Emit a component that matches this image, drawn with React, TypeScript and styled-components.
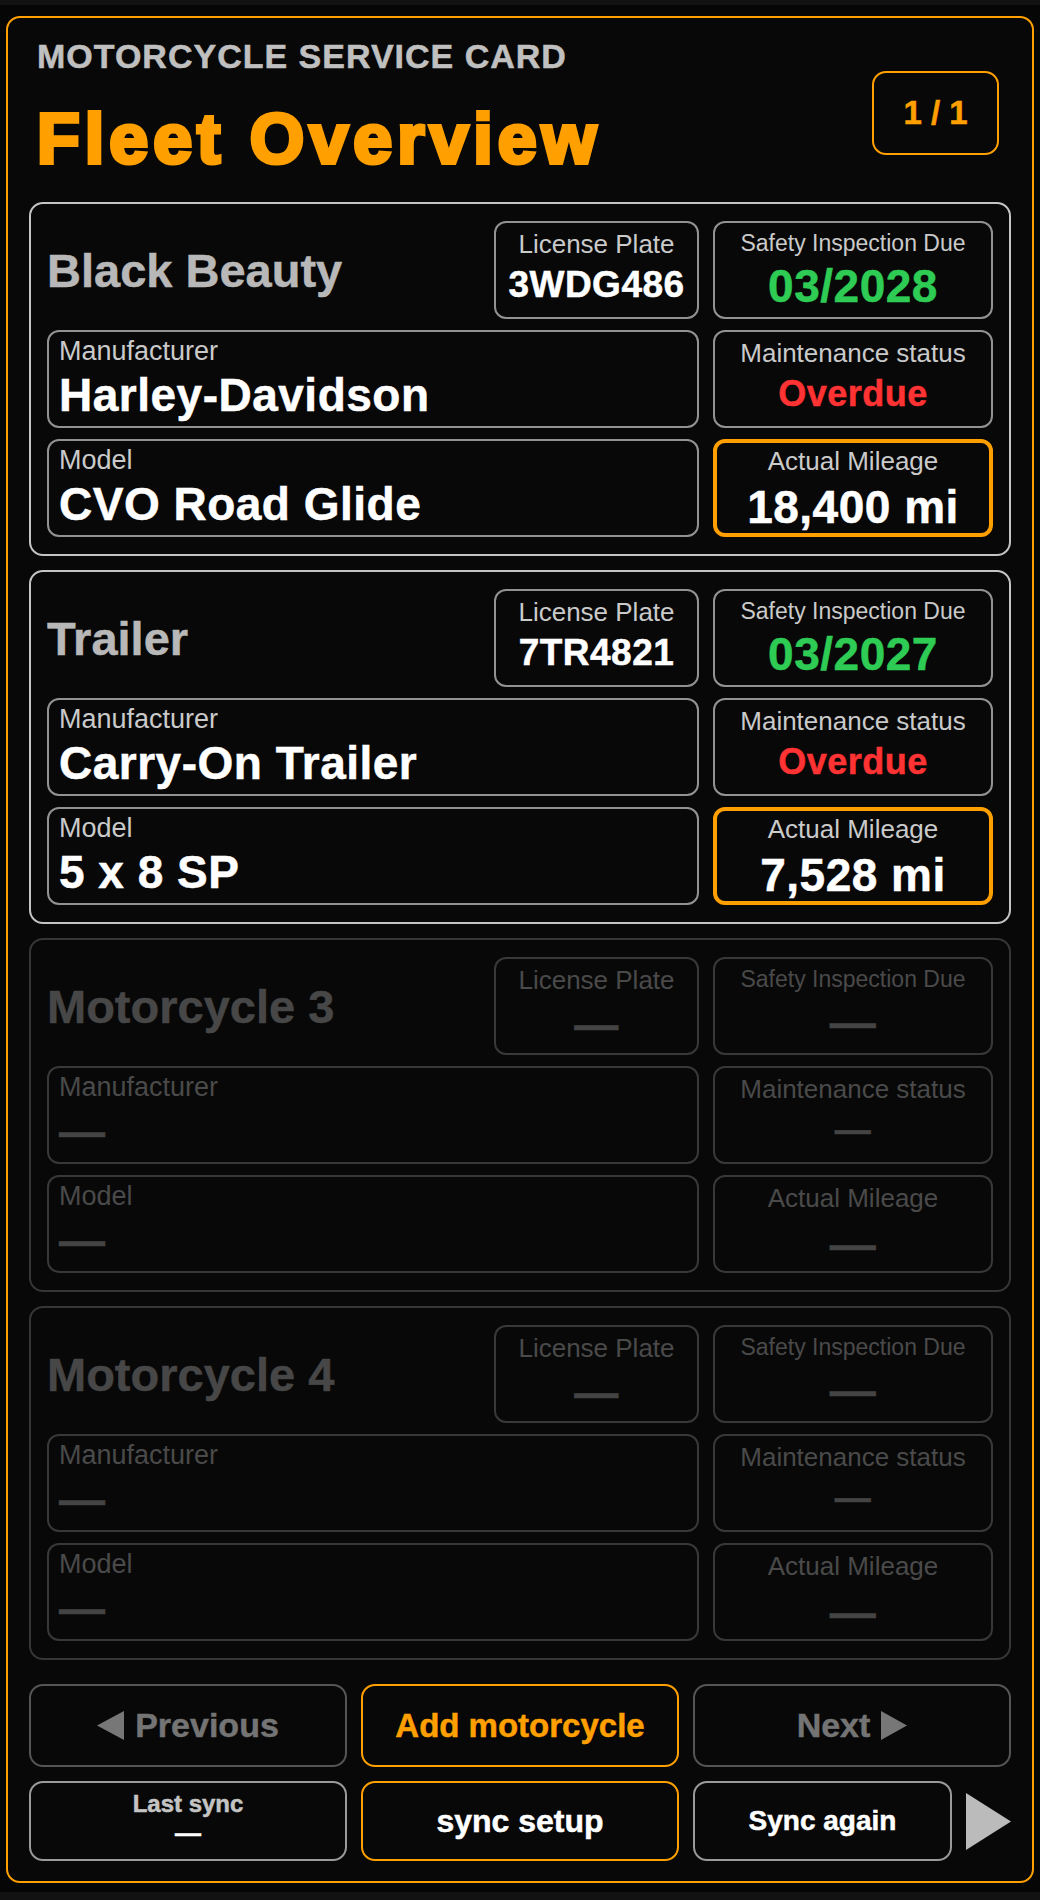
import React from 'react';
import styled, { createGlobalStyle, css } from 'styled-components';

const ORANGE = '#ffa000';

const GlobalStyle = createGlobalStyle`
  html, body {
    margin: 0;
    padding: 0;
    background: #121212;
  }
  body {
    font-family: "Liberation Sans", Arial, sans-serif;
  }
  * {
    box-sizing: border-box;
  }
`;

// the reference text is rendered a touch heavier than Liberation Bold
const heavy = css`
  -webkit-text-stroke: 0.5px currentColor;
`;

const Page = styled.div`
  margin-top: 5px;
  padding: 11px 6px 9px;
  background: #060606;
`;

const Frame = styled.div`
  border: 2px solid ${ORANGE};
  border-radius: 14px;
  background: #080808;
  padding: 16px 21px 20px;
`;

const Header = styled.header`
  display: flex;
  justify-content: space-between;
  align-items: flex-start;
  padding: 0 12px 0 8px;
  margin-bottom: 23px;
`;

const HeaderText = styled.div`
  display: flex;
  flex-direction: column;
  padding-top: 3px;
`;

const Eyebrow = styled.div`
  font-size: 34px;
  line-height: 39px;
  font-weight: 700;
  letter-spacing: 1px;
  color: #c0c0c0;
  ${heavy}
`;

const Title = styled.h1`
  margin: 23px 0 0;
  font-size: 70px;
  line-height: 80px;
  font-weight: 900;
  letter-spacing: 5px;
  color: ${ORANGE};
  -webkit-text-stroke: 4px ${ORANGE};
`;

const PageBadge = styled.div`
  margin-top: 37px;
  width: 127px;
  height: 84px;
  border: 2px solid ${ORANGE};
  border-radius: 14px;
  display: flex;
  align-items: center;
  justify-content: center;
  font-size: 33px;
  font-weight: 700;
  color: ${ORANGE};
  ${heavy}
`;

const CardList = styled.div`
  display: flex;
  flex-direction: column;
  gap: 14px;
`;

type Tone = 'active' | 'muted';

const Card = styled.section<{ $tone: Tone }>`
  border: 2px solid ${(p) => (p.$tone === 'active' ? '#c4c4c4' : '#363636')};
  border-radius: 14px;
  padding: 17px 16px 17px;
  display: grid;
  grid-template-columns: 1fr 280px;
  grid-auto-rows: 98px;
  column-gap: 14px;
  row-gap: 11px;
`;

const TopRow = styled.div`
  display: flex;
  align-items: center;
  justify-content: space-between;
`;

const BikeName = styled.h2<{ $tone: Tone }>`
  margin: 0;
  font-size: 47px;
  font-weight: 700;
  color: ${(p) => (p.$tone === 'active' ? '#b8b8b8' : '#474747')};
  ${heavy}
`;

const Field = styled.div<{ $tone: Tone }>`
  border: 2px solid ${(p) => (p.$tone === 'active' ? '#929292' : '#383838')};
  border-radius: 12px;
  padding: 4px 10px 0;
  display: flex;
  flex-direction: column;
`;

const FieldLabel = styled.div<{ $tone: Tone }>`
  font-size: 27px;
  line-height: 31px;
  color: ${(p) => (p.$tone === 'active' ? '#cacaca' : '#4a4a4a')};
`;

const FieldValue = styled.div<{ $tone: Tone }>`
  margin-top: 3px;
  font-size: 46px;
  line-height: 50px;
  font-weight: 700;
  letter-spacing: 0.5px;
  color: ${(p) => (p.$tone === 'active' ? '#ffffff' : '#444444')};
  ${heavy}
`;

const Stat = styled.div<{ $tone: Tone; $highlight?: boolean; $width?: number }>`
  width: ${(p) => (p.$width ? `${p.$width}px` : 'auto')};
  height: 98px;
  border: ${(p) => (p.$highlight ? 4 : 2)}px solid
    ${(p) => (p.$highlight ? ORANGE : p.$tone === 'active' ? '#929292' : '#383838')};
  border-radius: 12px;
  padding-top: ${(p) => (p.$highlight ? 4 : 7)}px;
  display: flex;
  flex-direction: column;
  align-items: center;
  text-align: center;
`;

const StatLabel = styled.div<{ $tone: Tone; $size: number }>`
  font-size: ${(p) => p.$size}px;
  line-height: 1.15;
  white-space: nowrap;
  color: ${(p) => (p.$tone === 'active' ? '#cacaca' : '#4a4a4a')};
`;

const StatValue = styled.div<{ $color: string; $size: number }>`
  margin-top: 4px;
  font-size: ${(p) => p.$size}px;
  line-height: 1.15;
  font-weight: 700;
  letter-spacing: 0.5px;
  white-space: nowrap;
  color: ${(p) => p.$color};
  ${heavy}
`;

const Controls = styled.div`
  margin-top: 24px;
  display: grid;
  grid-template-columns: repeat(3, 1fr);
  grid-template-rows: 83px 80px;
  gap: 14px;
`;

type Variant = 'muted' | 'accent' | 'sync' | 'plain';

const borderFor: Record<Variant, string> = {
  muted: '#555555',
  accent: ORANGE,
  sync: ORANGE,
  plain: '#9a9a9a',
};

const colorFor: Record<Variant, string> = {
  muted: '#747474',
  accent: ORANGE,
  sync: '#ffffff',
  plain: '#ffffff',
};

const Button = styled.button<{ $variant: Variant; $size: number }>`
  flex: 1;
  min-width: 0;
  height: 100%;
  background: transparent;
  border: 2px solid ${(p) => borderFor[p.$variant]};
  border-radius: 14px;
  display: flex;
  align-items: center;
  justify-content: center;
  gap: 11px;
  padding: 0;
  font-family: inherit;
  font-size: ${(p) => p.$size}px;
  font-weight: 700;
  color: ${(p) => colorFor[p.$variant]};
  cursor: pointer;
  ${heavy}
`;

const SyncStatus = styled(Button)`
  flex-direction: column;
  gap: 1px;
  padding-bottom: 5px;
`;

const SyncLabel = styled.span`
  font-size: 24px;
  line-height: 28px;
  color: #c4c4c4;
`;

const SyncDash = styled.span`
  font-size: 26px;
  line-height: 28px;
  color: #ffffff;
`;

const SyncCell = styled.div`
  display: flex;
  align-items: center;
  gap: 14px;
`;

const Arrow = ({ dir, color, w, h }: { dir: 'left' | 'right'; color: string; w: number; h: number }) => (
  <svg width={w} height={h} viewBox={`0 0 ${w} ${h}`} aria-hidden>
    <polygon
      points={dir === 'left' ? `${w},0 ${w},${h} 0,${h / 2}` : `0,0 0,${h} ${w},${h / 2}`}
      fill={color}
    />
  </svg>
);

interface Motorcycle {
  name: string;
  plate?: string;
  inspection?: string;
  manufacturer?: string;
  status?: string;
  model?: string;
  mileage?: string;
}

const fleet: Motorcycle[] = [
  {
    name: 'Black Beauty',
    plate: '3WDG486',
    inspection: '03/2028',
    manufacturer: 'Harley-Davidson',
    status: 'Overdue',
    model: 'CVO Road Glide',
    mileage: '18,400 mi',
  },
  {
    name: 'Trailer',
    plate: '7TR4821',
    inspection: '03/2027',
    manufacturer: 'Carry-On Trailer',
    status: 'Overdue',
    model: '5 x 8 SP',
    mileage: '7,528 mi',
  },
  { name: 'Motorcycle 3' },
  { name: 'Motorcycle 4' },
];

const DASH = '\u2014';

const BikeCard: React.FC<{ bike: Motorcycle }> = ({ bike }) => {
  const tone: Tone = bike.plate ? 'active' : 'muted';
  const active = tone === 'active';
  const muted = '#444444';

  return (
    <Card $tone={tone}>
      <TopRow>
        <BikeName $tone={tone}>{bike.name}</BikeName>
        <Stat $tone={tone} $width={205}>
          <StatLabel $tone={tone} $size={26}>License Plate</StatLabel>
          <StatValue $color={active ? '#ffffff' : muted} $size={active ? 37 : 44}>
            {bike.plate ?? DASH}
          </StatValue>
        </Stat>
      </TopRow>
      <Stat $tone={tone}>
        <StatLabel $tone={tone} $size={23}>Safety Inspection Due</StatLabel>
        <StatValue $color={active ? '#2ecc55' : muted} $size={46}>
          {bike.inspection ?? DASH}
        </StatValue>
      </Stat>

      <Field $tone={tone}>
        <FieldLabel $tone={tone}>Manufacturer</FieldLabel>
        <FieldValue $tone={tone}>{bike.manufacturer ?? DASH}</FieldValue>
      </Field>
      <Stat $tone={tone}>
        <StatLabel $tone={tone} $size={26}>Maintenance status</StatLabel>
        <StatValue $color={active ? '#ff3333' : muted} $size={36}>
          {bike.status ?? DASH}
        </StatValue>
      </Stat>

      <Field $tone={tone}>
        <FieldLabel $tone={tone}>Model</FieldLabel>
        <FieldValue $tone={tone}>{bike.model ?? DASH}</FieldValue>
      </Field>
      <Stat $tone={tone} $highlight={active}>
        <StatLabel $tone={tone} $size={26}>Actual Mileage</StatLabel>
        <StatValue $color={active ? '#ffffff' : muted} $size={46}>
          {bike.mileage ?? DASH}
        </StatValue>
      </Stat>
    </Card>
  );
};

export default function App() {
  return (
    <>
      <GlobalStyle />
      <Page>
        <Frame>
          <Header>
            <HeaderText>
              <Eyebrow>MOTORCYCLE SERVICE CARD</Eyebrow>
              <Title>Fleet Overview</Title>
            </HeaderText>
            <PageBadge>1 / 1</PageBadge>
          </Header>

          <CardList>
            {fleet.map((bike) => (
              <BikeCard key={bike.name} bike={bike} />
            ))}
          </CardList>

          <Controls>
            <Button $variant="muted" $size={34}>
              <Arrow dir="left" color="#777777" w={27} h={29} />
              Previous
            </Button>
            <Button $variant="accent" $size={33}>Add motorcycle</Button>
            <Button $variant="muted" $size={34}>
              Next
              <Arrow dir="right" color="#777777" w={26} h={29} />
            </Button>

            <SyncStatus $variant="plain" $size={24}>
              <SyncLabel>Last sync</SyncLabel>
              <SyncDash>{DASH}</SyncDash>
            </SyncStatus>
            <Button $variant="sync" $size={32}>sync setup</Button>
            <SyncCell>
              <Button $variant="plain" $size={28}>Sync again</Button>
              <Arrow dir="right" color="#bbbbbb" w={45} h={57} />
            </SyncCell>
          </Controls>
        </Frame>
      </Page>
    </>
  );
}
